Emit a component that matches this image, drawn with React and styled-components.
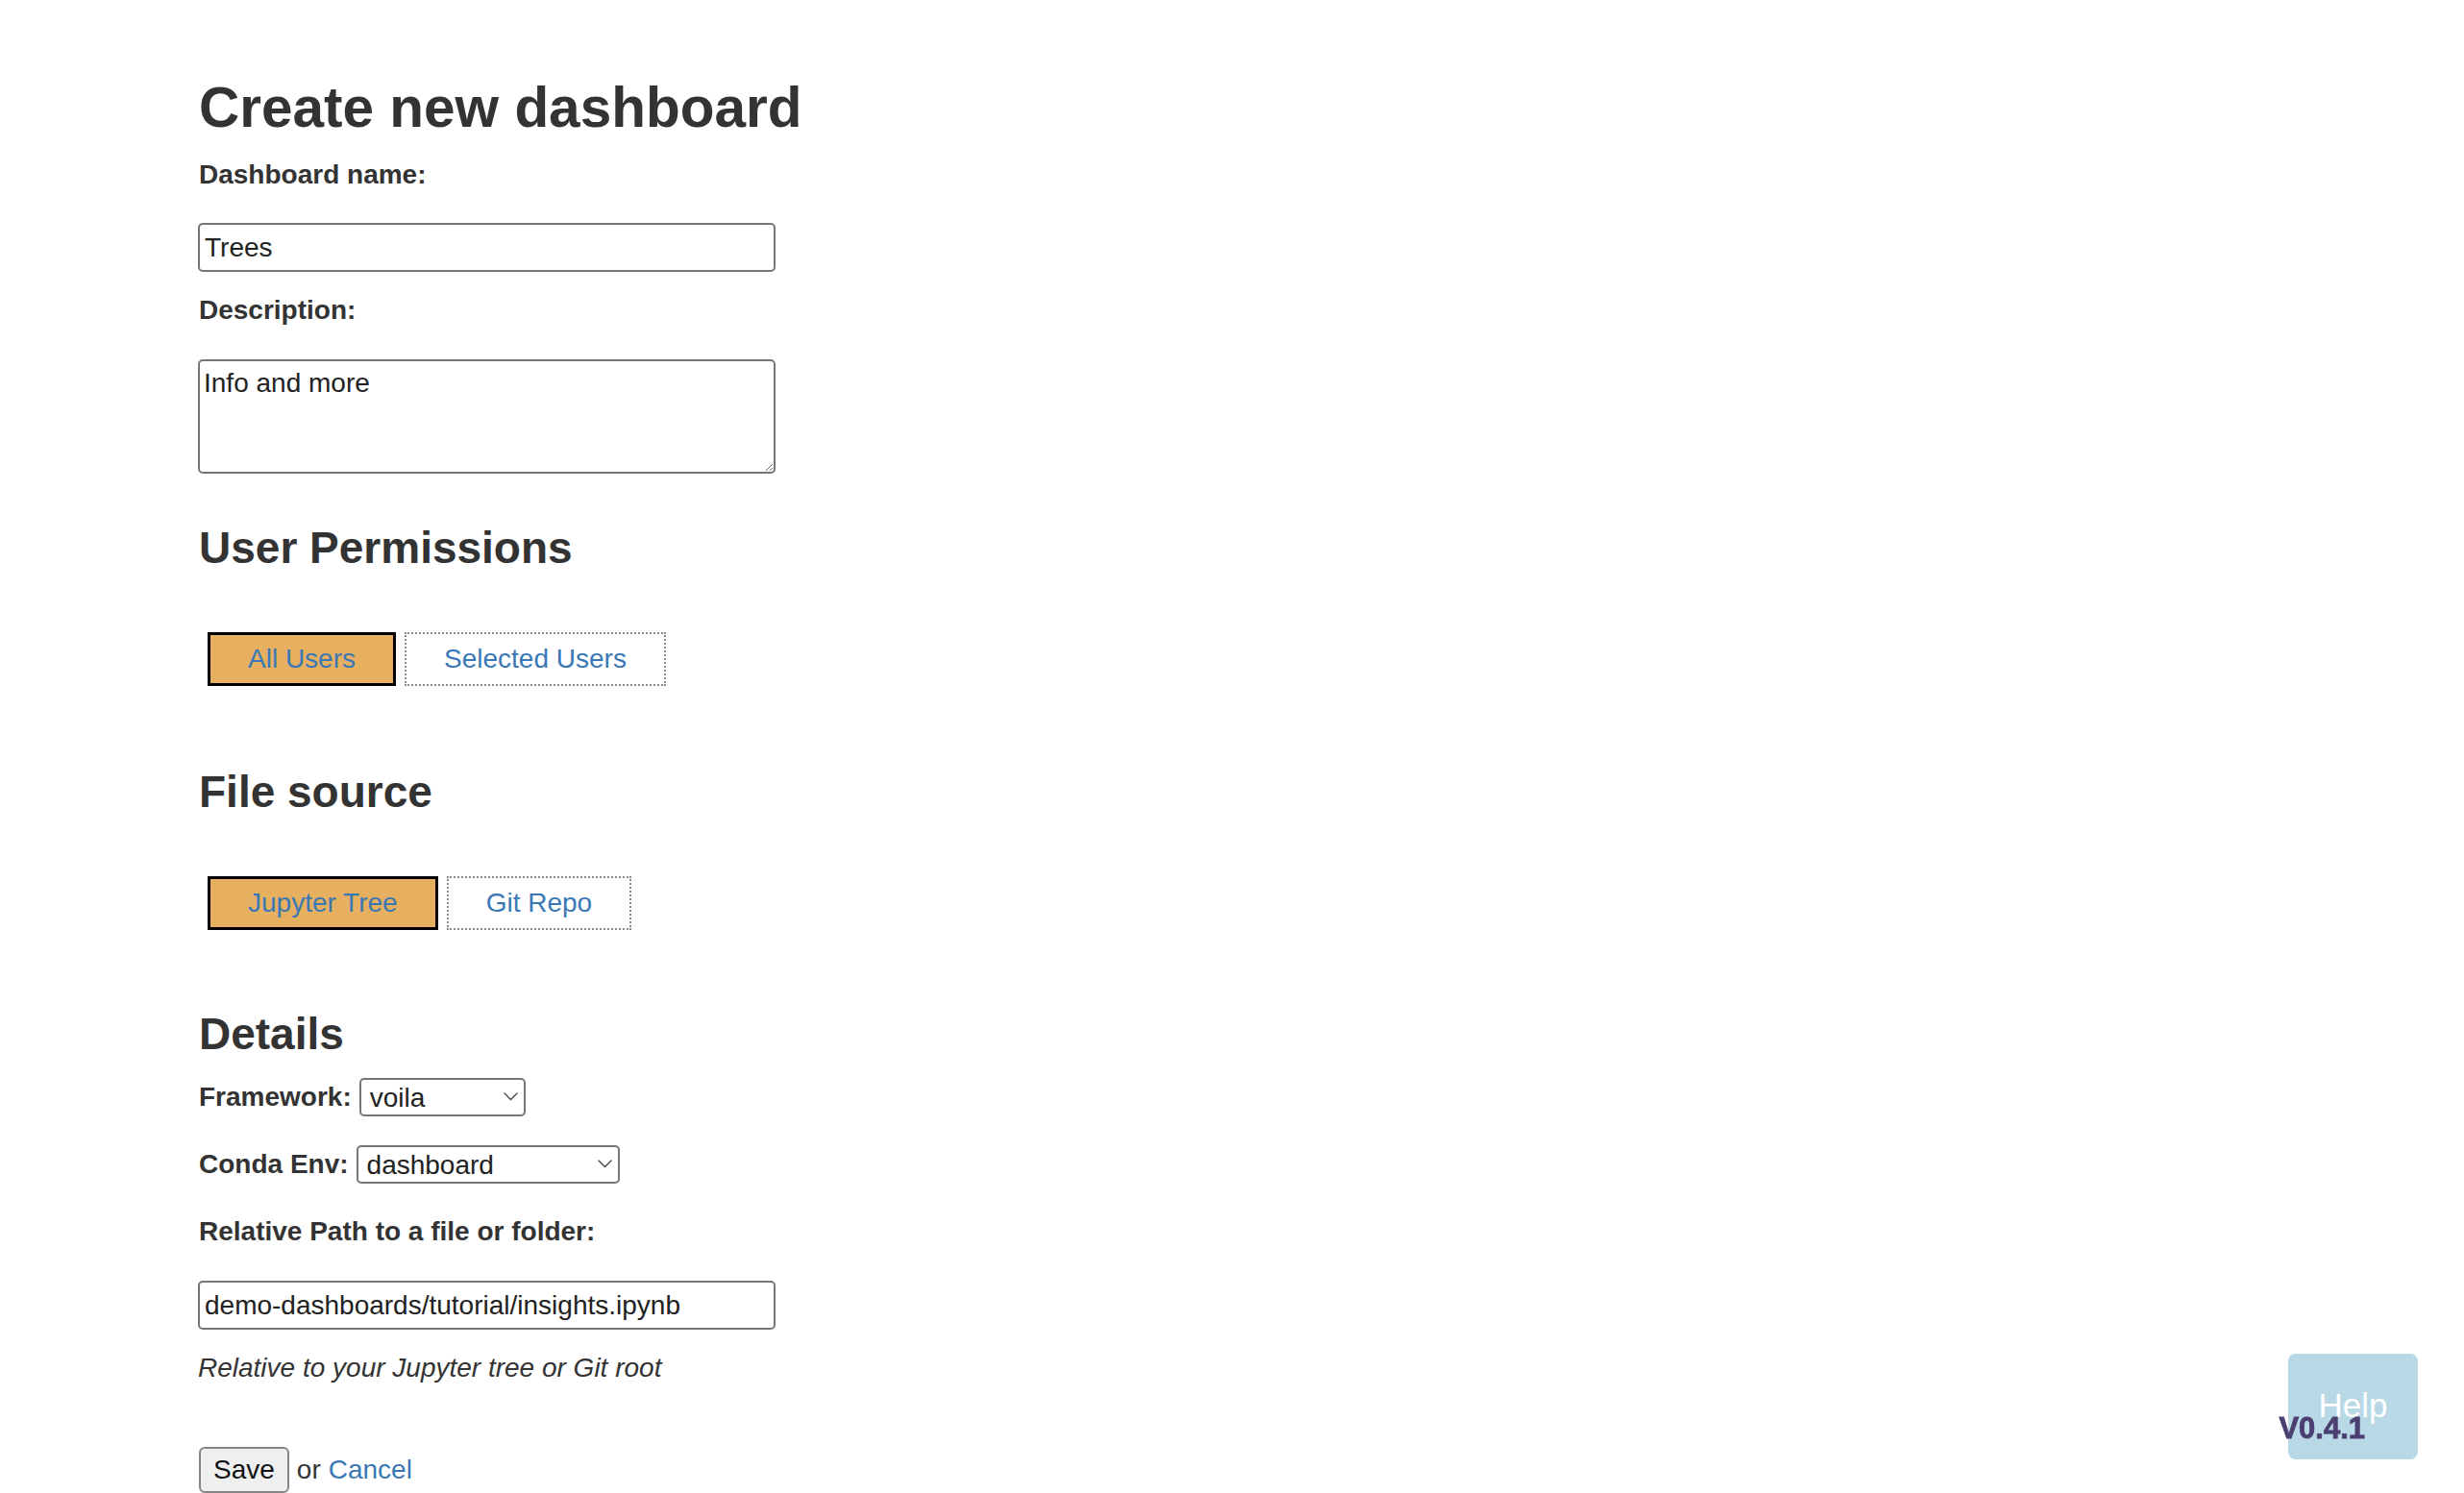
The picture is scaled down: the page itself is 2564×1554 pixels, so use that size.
import React from "react";
import styled, { createGlobalStyle } from "styled-components";

const GlobalStyle = createGlobalStyle`
  html, body {
    margin: 0;
    padding: 0;
    background: #ffffff;
    overflow: hidden;
  }
  body {
    font-family: "Liberation Sans", Arial, Helvetica, sans-serif;
    font-size: 28px;
    color: #333333;
  }
  * { box-sizing: border-box; }
`;

const Page = styled.main`
  display: flex;
  flex-direction: column;
  align-items: flex-start;
  padding: 79px 0 0 206px;
  min-height: 1554px;
`;

const Title = styled.h2`
  margin: 0;
  font-size: 58.5px;
  line-height: 65px;
  font-weight: 700;
  color: #333333;
  margin-left: 1px;
`;

const SectionTitle = styled.h3`
  margin: ${(p) => p.$mt}px 0 0 0;
  font-size: 46px;
  line-height: 50px;
  font-weight: 700;
  color: #333333;
  margin-left: 1px;
`;

const Label = styled.label`
  display: block;
  margin-top: ${(p) => p.$mt}px;
  font-weight: 700;
  font-size: 28px;
  line-height: 40px;
  margin-left: 1px;
`;

const TextInput = styled.input`
  display: block;
  margin-top: ${(p) => p.$mt}px;
  width: 601px;
  height: 51px;
  padding: 0 5px;
  border: 2px solid #767676;
  border-radius: 5px;
  font-family: "Liberation Sans", Arial, sans-serif;
  font-size: 28px;
  color: #222222;
  background: #ffffff;
  outline: none;
`;

const TextArea = styled.textarea`
  display: block;
  margin-top: ${(p) => p.$mt}px;
  width: 601px;
  height: 119px;
  padding: 7px 4px;
  border: 2px solid #767676;
  border-radius: 5px;
  font-family: "Liberation Sans", Arial, sans-serif;
  font-size: 28px;
  line-height: 31px;
  color: #222222;
  background: #ffffff;
  outline: none;
`;

const ToggleGroup = styled.div`
  display: flex;
  gap: 9px;
  margin-top: ${(p) => p.$mt}px;
  padding-left: 10px;
`;

const ToggleButton = styled.button`
  display: flex;
  align-items: center;
  justify-content: center;
  height: 56px;
  padding: 0 39px;
  font-family: "Liberation Sans", Arial, sans-serif;
  font-size: 28px;
  color: #3a78b5;
  background: ${(p) => (p.$active ? "#e6b060" : "#ffffff")};
  border: ${(p) => (p.$active ? "3px solid #000000" : "2px dotted #8a8a8a")};
  border-radius: 0;
  cursor: pointer;
`;

const FieldRow = styled.div`
  display: flex;
  align-items: center;
  gap: 8px;
  margin-top: ${(p) => p.$mt}px;
  height: 40px;
`;

const InlineLabel = styled.label`
  font-weight: 700;
  font-size: 28px;
  line-height: 40px;
  margin-left: 1px;
`;

const SelectWrap = styled.span`
  position: relative;
  display: inline-flex;
  width: ${(p) => p.$w}px;
  height: 40px;
`;

const Select = styled.select`
  appearance: none;
  -webkit-appearance: none;
  width: 100%;
  height: 40px;
  padding: 0 30px 0 9px;
  border: 2px solid #767676;
  border-radius: 5px;
  background: #ffffff;
  font-family: "Liberation Sans", Arial, sans-serif;
  font-size: 28px;
  color: #222222;
  outline: none;
`;

const Chevron = styled.svg`
  position: absolute;
  right: 8px;
  top: 15px;
  width: 15px;
  height: 9px;
  pointer-events: none;
`;

const Hint = styled.p`
  margin: ${(p) => p.$mt}px 0 0 0;
  font-style: italic;
  font-size: 28px;
  line-height: 40px;
  color: #333333;
`;

const ActionRow = styled.div`
  display: flex;
  align-items: center;
  gap: 8px;
  margin-top: ${(p) => p.$mt}px;
  margin-left: 1px;
  font-size: 28px;
`;

const SaveButton = styled.button`
  height: 48px;
  padding: 0 13px;
  border: 2px solid #858585;
  border-radius: 6px;
  background: #efefef;
  font-family: "Liberation Sans", Arial, sans-serif;
  font-size: 28px;
  color: #111111;
`;

const Link = styled.a`
  color: #3a78b5;
  text-decoration: none;
`;

const HelpBox = styled.div`
  position: fixed;
  right: 48px;
  bottom: 35px;
  width: 135px;
  height: 110px;
  display: flex;
  align-items: center;
  justify-content: center;
  background: #b7d8e4;
  border-radius: 8px;
  color: #ffffff;
  font-size: 35px;
  line-height: 1;
  padding-bottom: 4px;
`;

const Version = styled.div`
  position: fixed;
  right: 103px;
  bottom: 52px;
  font-family: "Liberation Sans", Arial, sans-serif;
  font-weight: 700;
  font-size: 31px;
  line-height: 31px;
  color: #4b3f72;
  -webkit-text-stroke: 0.8px #4b3f72;
`;

function ChevronIcon() {
  return (
    <Chevron viewBox="0 0 15 9" fill="none">
      <path d="M1 1 L7.5 7.5 L14 1" stroke="#444" strokeWidth="1.4" strokeLinecap="round" strokeLinejoin="round" />
    </Chevron>
  );
}

export default function App() {
  return (
    <>
      <GlobalStyle />
      <Page>
        <Title>Create new dashboard</Title>

        <Label $mt={18}>Dashboard name:</Label>
        <TextInput $mt={30} defaultValue="Trees" />

        <Label $mt={20}>Description:</Label>
        <TextArea $mt={31} defaultValue="Info and more" />

        <SectionTitle $mt={52}>User Permissions</SectionTitle>
        <ToggleGroup $mt={63}>
          <ToggleButton $active>All Users</ToggleButton>
          <ToggleButton>Selected Users</ToggleButton>
        </ToggleGroup>

        <SectionTitle $mt={85}>File source</SectionTitle>
        <ToggleGroup $mt={63}>
          <ToggleButton $active>Jupyter Tree</ToggleButton>
          <ToggleButton>Git Repo</ToggleButton>
        </ToggleGroup>

        <SectionTitle $mt={83}>Details</SectionTitle>
        <FieldRow $mt={21}>
          <InlineLabel>Framework:</InlineLabel>
          <SelectWrap $w={173}>
            <Select defaultValue="voila">
              <option value="voila">voila</option>
              <option value="streamlit">streamlit</option>
              <option value="bokeh">bokeh</option>
            </Select>
            <ChevronIcon />
          </SelectWrap>
        </FieldRow>
        <FieldRow $mt={30}>
          <InlineLabel>Conda Env:</InlineLabel>
          <SelectWrap $w={274}>
            <Select defaultValue="dashboard">
              <option value="dashboard">dashboard</option>
              <option value="base">base</option>
            </Select>
            <ChevronIcon />
          </SelectWrap>
        </FieldRow>

        <Label $mt={30}>Relative Path to a file or folder:</Label>
        <TextInput $mt={31} defaultValue="demo-dashboards/tutorial/insights.ipynb" />
        <Hint $mt={20}>Relative to your Jupyter tree or Git root</Hint>

        <ActionRow $mt={62}>
          <SaveButton>Save</SaveButton>
          <span>or</span>
          <Link href="#">Cancel</Link>
        </ActionRow>
      </Page>
      <HelpBox>Help</HelpBox>
      <Version>V0.4.1</Version>
    </>
  );
}
